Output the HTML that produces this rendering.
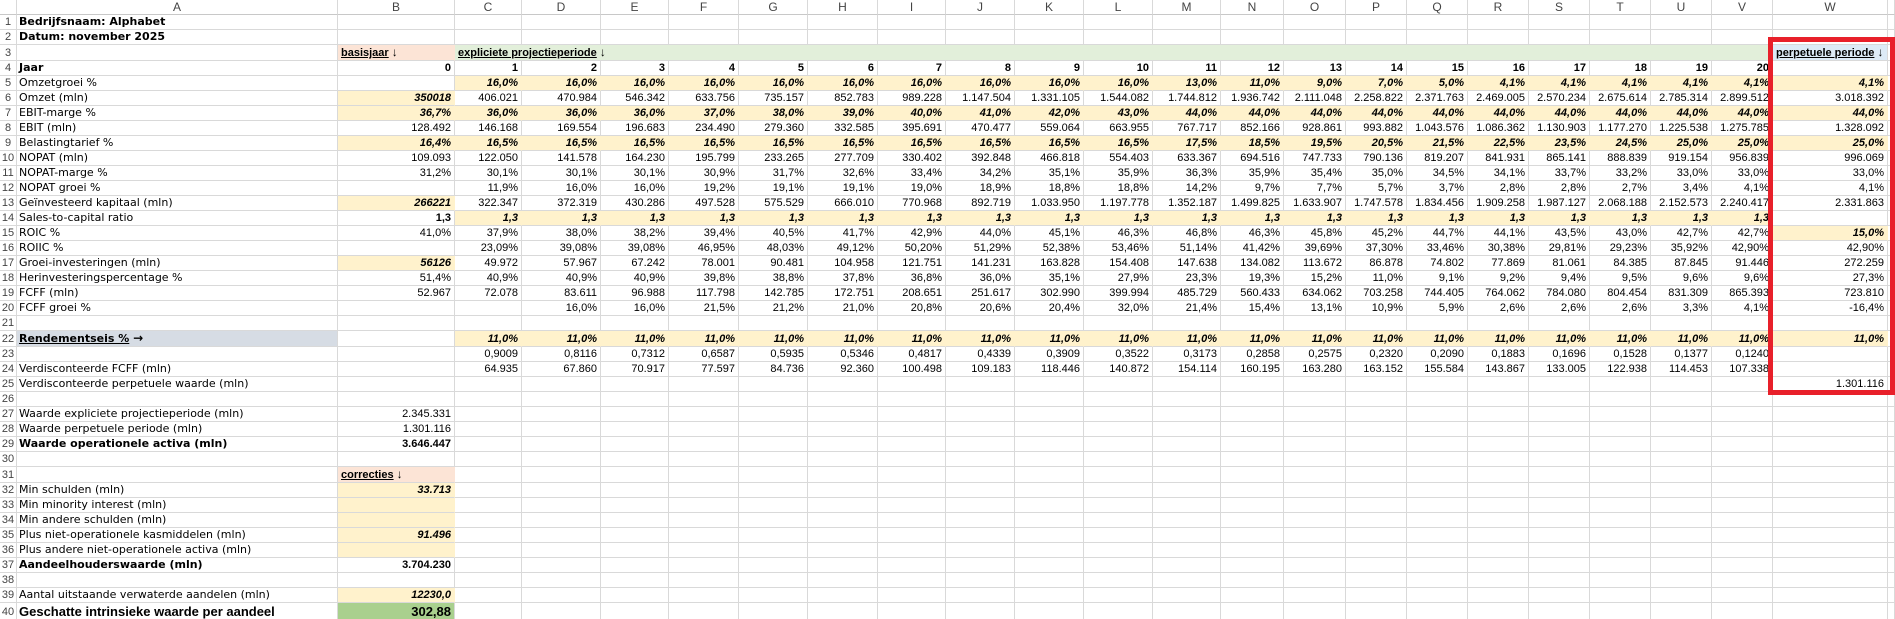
<!DOCTYPE html>
<html><head><meta charset="utf-8">
<style>
html,body{margin:0;padding:0;background:#fff;width:1895px;height:619px;overflow:hidden}
table{border-collapse:separate;border-spacing:0;table-layout:fixed;width:1895px;font-family:"Liberation Sans",sans-serif;font-size:11px;color:#000}
td{box-sizing:border-box;height:15px;padding:0 3px;border-right:1px solid #d9d9d9;border-bottom:1px solid #d9d9d9;text-align:right;white-space:nowrap;overflow:hidden;line-height:14px}
td.l{text-align:left;font-family:"DejaVu Sans","Liberation Sans",sans-serif;padding-left:2px}
td.n{text-align:center;color:#444;padding:0;font-size:11px}
tr.h td{text-align:center;color:#444;font-size:12px;border-bottom:1px solid #c8c8c8}
.y{background:#fff2cc;font-weight:bold;font-style:italic;border-right-color:#fff2cc}
.b{font-weight:bold}
.pe{background:#fce4d6;text-align:left;font-weight:bold;border-right-color:#fce4d6}
.gr{background:#e2efda;text-align:left;font-weight:bold;overflow:visible}
.bl{background:#ddebf7;text-align:left;font-weight:bold;overflow:visible}
.u{text-decoration:underline}
.ar{font-weight:bold;font-size:12px}
.gb{background:#d6dce4;font-weight:bold}
.fg{background:#a9d08e;font-weight:bold}
tr.big td{height:19px;font-size:13px;font-weight:bold;font-family:"Liberation Sans",sans-serif}
#red{position:absolute;left:1768px;top:37px;width:127px;height:358px;border:5px solid #e8202a;box-sizing:border-box}
</style></head><body>
<table>
<colgroup><col style="width:17px"><col style="width:321px"><col style="width:117px"><col style="width:67px"><col style="width:79px"><col style="width:68px"><col style="width:70px"><col style="width:69px"><col style="width:70px"><col style="width:68px"><col style="width:69px"><col style="width:69px"><col style="width:69px"><col style="width:68px"><col style="width:63px"><col style="width:62px"><col style="width:61px"><col style="width:61px"><col style="width:61px"><col style="width:61px"><col style="width:61px"><col style="width:61px"><col style="width:61px"><col style="width:115px"><col style="width:7px"></colgroup>
<tr class="h"><td></td><td>A</td><td>B</td><td>C</td><td>D</td><td>E</td><td>F</td><td>G</td><td>H</td><td>I</td><td>J</td><td>K</td><td>L</td><td>M</td><td>N</td><td>O</td><td>P</td><td>Q</td><td>R</td><td>S</td><td>T</td><td>U</td><td>V</td><td>W</td><td></td></tr>
<tr><td class="n">1</td><td class="l b">Bedrijfsnaam: Alphabet</td><td></td><td></td><td></td><td></td><td></td><td></td><td></td><td></td><td></td><td></td><td></td><td></td><td></td><td></td><td></td><td></td><td></td><td></td><td></td><td></td><td></td><td></td><td></td></tr>
<tr><td class="n">2</td><td class="l b">Datum: november 2025</td><td></td><td></td><td></td><td></td><td></td><td></td><td></td><td></td><td></td><td></td><td></td><td></td><td></td><td></td><td></td><td></td><td></td><td></td><td></td><td></td><td></td><td></td><td></td></tr>
<tr><td class="n">3</td><td></td><td class="pe"><span class="u">basisjaar</span> <span class="ar">↓</span></td><td class="gr" colspan="20"><span class="u">expliciete projectieperiode</span> <span class="ar">↓</span></td><td class="bl"><span class="u">perpetuele periode</span> <span class="ar">↓</span></td><td></td></tr>
<tr class="b"><td class="n" style="font-weight:normal">4</td><td class="l">Jaar</td><td>0</td><td>1</td><td>2</td><td>3</td><td>4</td><td>5</td><td>6</td><td>7</td><td>8</td><td>9</td><td>10</td><td>11</td><td>12</td><td>13</td><td>14</td><td>15</td><td>16</td><td>17</td><td>18</td><td>19</td><td>20</td><td></td><td></td></tr>
<tr><td class="n">5</td><td class="l">Omzetgroei %</td><td></td><td class="y">16,0%</td><td class="y">16,0%</td><td class="y">16,0%</td><td class="y">16,0%</td><td class="y">16,0%</td><td class="y">16,0%</td><td class="y">16,0%</td><td class="y">16,0%</td><td class="y">16,0%</td><td class="y">16,0%</td><td class="y">13,0%</td><td class="y">11,0%</td><td class="y">9,0%</td><td class="y">7,0%</td><td class="y">5,0%</td><td class="y">4,1%</td><td class="y">4,1%</td><td class="y">4,1%</td><td class="y">4,1%</td><td class="y">4,1%</td><td class="y">4,1%</td><td></td></tr>
<tr><td class="n">6</td><td class="l">Omzet (mln)</td><td class="y">350018</td><td>406.021</td><td>470.984</td><td>546.342</td><td>633.756</td><td>735.157</td><td>852.783</td><td>989.228</td><td>1.147.504</td><td>1.331.105</td><td>1.544.082</td><td>1.744.812</td><td>1.936.742</td><td>2.111.048</td><td>2.258.822</td><td>2.371.763</td><td>2.469.005</td><td>2.570.234</td><td>2.675.614</td><td>2.785.314</td><td>2.899.512</td><td>3.018.392</td><td></td></tr>
<tr><td class="n">7</td><td class="l">EBIT-marge %</td><td class="y">36,7%</td><td class="y">36,0%</td><td class="y">36,0%</td><td class="y">36,0%</td><td class="y">37,0%</td><td class="y">38,0%</td><td class="y">39,0%</td><td class="y">40,0%</td><td class="y">41,0%</td><td class="y">42,0%</td><td class="y">43,0%</td><td class="y">44,0%</td><td class="y">44,0%</td><td class="y">44,0%</td><td class="y">44,0%</td><td class="y">44,0%</td><td class="y">44,0%</td><td class="y">44,0%</td><td class="y">44,0%</td><td class="y">44,0%</td><td class="y">44,0%</td><td class="y">44,0%</td><td></td></tr>
<tr><td class="n">8</td><td class="l">EBIT (mln)</td><td>128.492</td><td>146.168</td><td>169.554</td><td>196.683</td><td>234.490</td><td>279.360</td><td>332.585</td><td>395.691</td><td>470.477</td><td>559.064</td><td>663.955</td><td>767.717</td><td>852.166</td><td>928.861</td><td>993.882</td><td>1.043.576</td><td>1.086.362</td><td>1.130.903</td><td>1.177.270</td><td>1.225.538</td><td>1.275.785</td><td>1.328.092</td><td></td></tr>
<tr><td class="n">9</td><td class="l">Belastingtarief %</td><td class="y">16,4%</td><td class="y">16,5%</td><td class="y">16,5%</td><td class="y">16,5%</td><td class="y">16,5%</td><td class="y">16,5%</td><td class="y">16,5%</td><td class="y">16,5%</td><td class="y">16,5%</td><td class="y">16,5%</td><td class="y">16,5%</td><td class="y">17,5%</td><td class="y">18,5%</td><td class="y">19,5%</td><td class="y">20,5%</td><td class="y">21,5%</td><td class="y">22,5%</td><td class="y">23,5%</td><td class="y">24,5%</td><td class="y">25,0%</td><td class="y">25,0%</td><td class="y">25,0%</td><td></td></tr>
<tr><td class="n">10</td><td class="l">NOPAT (mln)</td><td>109.093</td><td>122.050</td><td>141.578</td><td>164.230</td><td>195.799</td><td>233.265</td><td>277.709</td><td>330.402</td><td>392.848</td><td>466.818</td><td>554.403</td><td>633.367</td><td>694.516</td><td>747.733</td><td>790.136</td><td>819.207</td><td>841.931</td><td>865.141</td><td>888.839</td><td>919.154</td><td>956.839</td><td>996.069</td><td></td></tr>
<tr><td class="n">11</td><td class="l">NOPAT-marge %</td><td>31,2%</td><td>30,1%</td><td>30,1%</td><td>30,1%</td><td>30,9%</td><td>31,7%</td><td>32,6%</td><td>33,4%</td><td>34,2%</td><td>35,1%</td><td>35,9%</td><td>36,3%</td><td>35,9%</td><td>35,4%</td><td>35,0%</td><td>34,5%</td><td>34,1%</td><td>33,7%</td><td>33,2%</td><td>33,0%</td><td>33,0%</td><td>33,0%</td><td></td></tr>
<tr><td class="n">12</td><td class="l">NOPAT groei %</td><td></td><td>11,9%</td><td>16,0%</td><td>16,0%</td><td>19,2%</td><td>19,1%</td><td>19,1%</td><td>19,0%</td><td>18,9%</td><td>18,8%</td><td>18,8%</td><td>14,2%</td><td>9,7%</td><td>7,7%</td><td>5,7%</td><td>3,7%</td><td>2,8%</td><td>2,8%</td><td>2,7%</td><td>3,4%</td><td>4,1%</td><td>4,1%</td><td></td></tr>
<tr><td class="n">13</td><td class="l">Geïnvesteerd kapitaal (mln)</td><td class="y">266221</td><td>322.347</td><td>372.319</td><td>430.286</td><td>497.528</td><td>575.529</td><td>666.010</td><td>770.968</td><td>892.719</td><td>1.033.950</td><td>1.197.778</td><td>1.352.187</td><td>1.499.825</td><td>1.633.907</td><td>1.747.578</td><td>1.834.456</td><td>1.909.258</td><td>1.987.127</td><td>2.068.188</td><td>2.152.573</td><td>2.240.417</td><td>2.331.863</td><td></td></tr>
<tr><td class="n">14</td><td class="l">Sales-to-capital ratio</td><td class="b">1,3</td><td class="y">1,3</td><td class="y">1,3</td><td class="y">1,3</td><td class="y">1,3</td><td class="y">1,3</td><td class="y">1,3</td><td class="y">1,3</td><td class="y">1,3</td><td class="y">1,3</td><td class="y">1,3</td><td class="y">1,3</td><td class="y">1,3</td><td class="y">1,3</td><td class="y">1,3</td><td class="y">1,3</td><td class="y">1,3</td><td class="y">1,3</td><td class="y">1,3</td><td class="y">1,3</td><td class="y">1,3</td><td></td><td></td></tr>
<tr><td class="n">15</td><td class="l">ROIC %</td><td>41,0%</td><td>37,9%</td><td>38,0%</td><td>38,2%</td><td>39,4%</td><td>40,5%</td><td>41,7%</td><td>42,9%</td><td>44,0%</td><td>45,1%</td><td>46,3%</td><td>46,8%</td><td>46,3%</td><td>45,8%</td><td>45,2%</td><td>44,7%</td><td>44,1%</td><td>43,5%</td><td>43,0%</td><td>42,7%</td><td>42,7%</td><td class="y">15,0%</td><td></td></tr>
<tr><td class="n">16</td><td class="l">ROIIC %</td><td></td><td>23,09%</td><td>39,08%</td><td>39,08%</td><td>46,95%</td><td>48,03%</td><td>49,12%</td><td>50,20%</td><td>51,29%</td><td>52,38%</td><td>53,46%</td><td>51,14%</td><td>41,42%</td><td>39,69%</td><td>37,30%</td><td>33,46%</td><td>30,38%</td><td>29,81%</td><td>29,23%</td><td>35,92%</td><td>42,90%</td><td>42,90%</td><td></td></tr>
<tr><td class="n">17</td><td class="l">Groei-investeringen (mln)</td><td class="y">56126</td><td>49.972</td><td>57.967</td><td>67.242</td><td>78.001</td><td>90.481</td><td>104.958</td><td>121.751</td><td>141.231</td><td>163.828</td><td>154.408</td><td>147.638</td><td>134.082</td><td>113.672</td><td>86.878</td><td>74.802</td><td>77.869</td><td>81.061</td><td>84.385</td><td>87.845</td><td>91.446</td><td>272.259</td><td></td></tr>
<tr><td class="n">18</td><td class="l">Herinvesteringspercentage %</td><td>51,4%</td><td>40,9%</td><td>40,9%</td><td>40,9%</td><td>39,8%</td><td>38,8%</td><td>37,8%</td><td>36,8%</td><td>36,0%</td><td>35,1%</td><td>27,9%</td><td>23,3%</td><td>19,3%</td><td>15,2%</td><td>11,0%</td><td>9,1%</td><td>9,2%</td><td>9,4%</td><td>9,5%</td><td>9,6%</td><td>9,6%</td><td>27,3%</td><td></td></tr>
<tr><td class="n">19</td><td class="l">FCFF (mln)</td><td>52.967</td><td>72.078</td><td>83.611</td><td>96.988</td><td>117.798</td><td>142.785</td><td>172.751</td><td>208.651</td><td>251.617</td><td>302.990</td><td>399.994</td><td>485.729</td><td>560.433</td><td>634.062</td><td>703.258</td><td>744.405</td><td>764.062</td><td>784.080</td><td>804.454</td><td>831.309</td><td>865.393</td><td>723.810</td><td></td></tr>
<tr><td class="n">20</td><td class="l">FCFF groei %</td><td></td><td></td><td>16,0%</td><td>16,0%</td><td>21,5%</td><td>21,2%</td><td>21,0%</td><td>20,8%</td><td>20,6%</td><td>20,4%</td><td>32,0%</td><td>21,4%</td><td>15,4%</td><td>13,1%</td><td>10,9%</td><td>5,9%</td><td>2,6%</td><td>2,6%</td><td>2,6%</td><td>3,3%</td><td>4,1%</td><td>-16,4%</td><td></td></tr>
<tr><td class="n">21</td><td></td><td></td><td></td><td></td><td></td><td></td><td></td><td></td><td></td><td></td><td></td><td></td><td></td><td></td><td></td><td></td><td></td><td></td><td></td><td></td><td></td><td></td><td></td><td></td></tr>
<tr><td class="n">22</td><td class="l gb"><span class="u">Rendementseis %</span> <span class="ar">→</span></td><td></td><td class="y">11,0%</td><td class="y">11,0%</td><td class="y">11,0%</td><td class="y">11,0%</td><td class="y">11,0%</td><td class="y">11,0%</td><td class="y">11,0%</td><td class="y">11,0%</td><td class="y">11,0%</td><td class="y">11,0%</td><td class="y">11,0%</td><td class="y">11,0%</td><td class="y">11,0%</td><td class="y">11,0%</td><td class="y">11,0%</td><td class="y">11,0%</td><td class="y">11,0%</td><td class="y">11,0%</td><td class="y">11,0%</td><td class="y">11,0%</td><td class="y">11,0%</td><td></td></tr>
<tr><td class="n">23</td><td></td><td></td><td>0,9009</td><td>0,8116</td><td>0,7312</td><td>0,6587</td><td>0,5935</td><td>0,5346</td><td>0,4817</td><td>0,4339</td><td>0,3909</td><td>0,3522</td><td>0,3173</td><td>0,2858</td><td>0,2575</td><td>0,2320</td><td>0,2090</td><td>0,1883</td><td>0,1696</td><td>0,1528</td><td>0,1377</td><td>0,1240</td><td></td><td></td></tr>
<tr><td class="n">24</td><td class="l">Verdisconteerde FCFF (mln)</td><td></td><td>64.935</td><td>67.860</td><td>70.917</td><td>77.597</td><td>84.736</td><td>92.360</td><td>100.498</td><td>109.183</td><td>118.446</td><td>140.872</td><td>154.114</td><td>160.195</td><td>163.280</td><td>163.152</td><td>155.584</td><td>143.867</td><td>133.005</td><td>122.938</td><td>114.453</td><td>107.338</td><td></td><td></td></tr>
<tr><td class="n">25</td><td class="l">Verdisconteerde perpetuele waarde (mln)</td><td></td><td></td><td></td><td></td><td></td><td></td><td></td><td></td><td></td><td></td><td></td><td></td><td></td><td></td><td></td><td></td><td></td><td></td><td></td><td></td><td></td><td>1.301.116</td><td></td></tr>
<tr><td class="n">26</td><td></td><td></td><td></td><td></td><td></td><td></td><td></td><td></td><td></td><td></td><td></td><td></td><td></td><td></td><td></td><td></td><td></td><td></td><td></td><td></td><td></td><td></td><td></td><td></td></tr>
<tr><td class="n">27</td><td class="l">Waarde expliciete projectieperiode (mln)</td><td>2.345.331</td><td></td><td></td><td></td><td></td><td></td><td></td><td></td><td></td><td></td><td></td><td></td><td></td><td></td><td></td><td></td><td></td><td></td><td></td><td></td><td></td><td></td><td></td></tr>
<tr><td class="n">28</td><td class="l">Waarde perpetuele periode (mln)</td><td>1.301.116</td><td></td><td></td><td></td><td></td><td></td><td></td><td></td><td></td><td></td><td></td><td></td><td></td><td></td><td></td><td></td><td></td><td></td><td></td><td></td><td></td><td></td><td></td></tr>
<tr><td class="n">29</td><td class="l b">Waarde operationele activa (mln)</td><td class="b">3.646.447</td><td></td><td></td><td></td><td></td><td></td><td></td><td></td><td></td><td></td><td></td><td></td><td></td><td></td><td></td><td></td><td></td><td></td><td></td><td></td><td></td><td></td><td></td></tr>
<tr><td class="n">30</td><td></td><td></td><td></td><td></td><td></td><td></td><td></td><td></td><td></td><td></td><td></td><td></td><td></td><td></td><td></td><td></td><td></td><td></td><td></td><td></td><td></td><td></td><td></td><td></td></tr>
<tr><td class="n">31</td><td></td><td class="pe"><span class="u">correcties</span> <span class="ar">↓</span></td><td></td><td></td><td></td><td></td><td></td><td></td><td></td><td></td><td></td><td></td><td></td><td></td><td></td><td></td><td></td><td></td><td></td><td></td><td></td><td></td><td></td><td></td></tr>
<tr><td class="n">32</td><td class="l">Min schulden (mln)</td><td class="y">33.713</td><td></td><td></td><td></td><td></td><td></td><td></td><td></td><td></td><td></td><td></td><td></td><td></td><td></td><td></td><td></td><td></td><td></td><td></td><td></td><td></td><td></td><td></td></tr>
<tr><td class="n">33</td><td class="l">Min minority interest (mln)</td><td class="y"></td><td></td><td></td><td></td><td></td><td></td><td></td><td></td><td></td><td></td><td></td><td></td><td></td><td></td><td></td><td></td><td></td><td></td><td></td><td></td><td></td><td></td><td></td></tr>
<tr><td class="n">34</td><td class="l">Min andere schulden (mln)</td><td class="y"></td><td></td><td></td><td></td><td></td><td></td><td></td><td></td><td></td><td></td><td></td><td></td><td></td><td></td><td></td><td></td><td></td><td></td><td></td><td></td><td></td><td></td><td></td></tr>
<tr><td class="n">35</td><td class="l">Plus niet-operationele kasmiddelen (mln)</td><td class="y">91.496</td><td></td><td></td><td></td><td></td><td></td><td></td><td></td><td></td><td></td><td></td><td></td><td></td><td></td><td></td><td></td><td></td><td></td><td></td><td></td><td></td><td></td><td></td></tr>
<tr><td class="n">36</td><td class="l">Plus andere niet-operationele activa (mln)</td><td class="y"></td><td></td><td></td><td></td><td></td><td></td><td></td><td></td><td></td><td></td><td></td><td></td><td></td><td></td><td></td><td></td><td></td><td></td><td></td><td></td><td></td><td></td><td></td></tr>
<tr><td class="n">37</td><td class="l b">Aandeelhouderswaarde (mln)</td><td class="b">3.704.230</td><td></td><td></td><td></td><td></td><td></td><td></td><td></td><td></td><td></td><td></td><td></td><td></td><td></td><td></td><td></td><td></td><td></td><td></td><td></td><td></td><td></td><td></td></tr>
<tr><td class="n">38</td><td></td><td></td><td></td><td></td><td></td><td></td><td></td><td></td><td></td><td></td><td></td><td></td><td></td><td></td><td></td><td></td><td></td><td></td><td></td><td></td><td></td><td></td><td></td><td></td></tr>
<tr><td class="n">39</td><td class="l">Aantal uitstaande verwaterde aandelen (mln)</td><td class="y">12230,0</td><td></td><td></td><td></td><td></td><td></td><td></td><td></td><td></td><td></td><td></td><td></td><td></td><td></td><td></td><td></td><td></td><td></td><td></td><td></td><td></td><td></td><td></td></tr>
<tr class="big"><td class="n" style="font-weight:normal;font-size:11px">40</td><td class="l" style="font-family:'Liberation Sans',sans-serif;font-size:13px">Geschatte intrinsieke waarde per aandeel</td><td class="fg">302,88</td><td></td><td></td><td></td><td></td><td></td><td></td><td></td><td></td><td></td><td></td><td></td><td></td><td></td><td></td><td></td><td></td><td></td><td></td><td></td><td></td><td></td><td></td></tr>
</table>
<div id="red"></div>
</body></html>
